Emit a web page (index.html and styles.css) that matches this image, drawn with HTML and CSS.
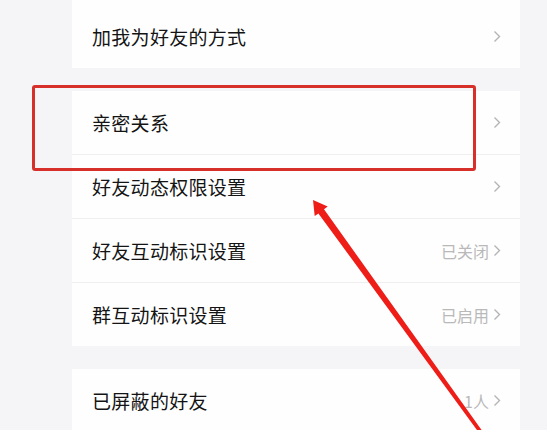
FILE: index.html
```html
<!DOCTYPE html>
<html lang="zh-CN">
<head>
<meta charset="utf-8">
<link rel="stylesheet" href="styles.css">
</head>
<body>
<div class="page">
  <div class="card">
    <div class="row row-first">
      <span class="label">加我为好友的方式</span>
      <span class="right"><svg class="chev" viewBox="0 0 8 13"><polyline points="1.5,1.5 6.5,6.5 1.5,11.5"/></svg></span>
    </div>
  </div>
  <div class="card">
    <div class="row">
      <span class="label">亲密关系</span>
      <span class="right"><svg class="chev" viewBox="0 0 8 13"><polyline points="1.5,1.5 6.5,6.5 1.5,11.5"/></svg></span>
    </div>
    <div class="row">
      <span class="label">好友动态权限设置</span>
      <span class="right"><svg class="chev" viewBox="0 0 8 13"><polyline points="1.5,1.5 6.5,6.5 1.5,11.5"/></svg></span>
    </div>
    <div class="row">
      <span class="label">好友互动标识设置</span>
      <span class="right"><span class="value">已关闭</span><svg class="chev" viewBox="0 0 8 13"><polyline points="1.5,1.5 6.5,6.5 1.5,11.5"/></svg></span>
    </div>
    <div class="row">
      <span class="label">群互动标识设置</span>
      <span class="right"><span class="value">已启用</span><svg class="chev" viewBox="0 0 8 13"><polyline points="1.5,1.5 6.5,6.5 1.5,11.5"/></svg></span>
    </div>
  </div>
  <div class="card">
    <div class="row">
      <span class="label">已屏蔽的好友</span>
      <span class="right"><span class="value">1人</span><svg class="chev" viewBox="0 0 8 13"><polyline points="1.5,1.5 6.5,6.5 1.5,11.5"/></svg></span>
    </div>
  </div>
</div>
<div class="highlight"></div>
<svg class="arrow" viewBox="0 0 547 430" width="547" height="430">
  <polygon points="313,200 327.7,206.6 324,209.3 488,439 485,441 318.4,213.4 314.7,216"/>
</svg>
</body>
</html>
```
FILE: styles.css
```css
html, body {
  margin: 0;
  padding: 0;
}
body {
  background: #f5f5f7;
  font-family: "Noto Sans CJK SC", "Noto Sans", sans-serif;
  width: 547px;
  height: 430px;
  overflow: hidden;
  position: relative;
}
.page {
  display: flex;
  flex-direction: column;
  gap: 23px;
  padding: 0 27px 0 72px;
}
.card {
  background: #fefefe;
  display: flex;
  flex-direction: column;
}
.row {
  box-sizing: border-box;
  display: flex;
  align-items: center;
  justify-content: space-between;
  padding: 0 19px 0 20px;
  border-bottom: 1px solid #efefef;
  height: 64px;
}
.row:last-child {
  border-bottom: none;
  height: 63px;
}
.row-first {
  height: 68px !important;
  padding-top: 5px;
}
.label {
  font-size: 19px;
  color: #141414;
  letter-spacing: 0.3px;
}
.right {
  display: flex;
  align-items: center;
  gap: 4px;
}
.value {
  font-size: 16px;
  color: #b9b9b9;
}
.chev {
  width: 8px;
  height: 13px;
  fill: none;
  stroke: #b4b4b4;
  stroke-width: 1.4;
}
.highlight {
  position: absolute;
  left: 32px;
  top: 85px;
  width: 438px;
  height: 80px;
  border: 3px solid #d7302a;
  border-radius: 3px;
}
.arrow {
  position: absolute;
  left: 0;
  top: 0;
}
.arrow polygon {
  fill: #ee1d18;
}
```
